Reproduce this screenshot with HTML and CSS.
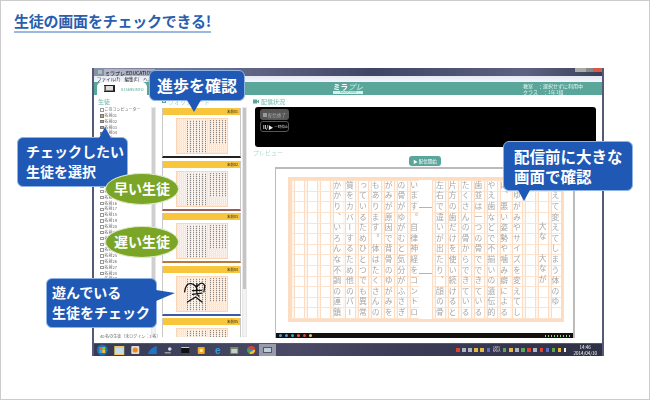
FILE: index.html
```html
<!DOCTYPE html>
<html lang="ja">
<head>
<meta charset="utf-8">
<title>生徒の画面をチェックできる!</title>
<link rel="stylesheet" href="styles.css">
</head>
<body>
<div class="page">
  <h1 class="title">生徒の画面をチェックできる!</h1>

  <div class="window">
    <div class="titlebar">
      <span class="app-icon"></span><span class="app-name">ミラプレ EDUCATION</span>
      <span class="win-btns"></span>
    </div>
    <div class="menubar"><span>ファイル(F)</span><span>編集(E)</span><span>ヘルプ(H)</span></div>
    <div class="header">
      <div class="tab">
        <svg class="tab-icon" width="13" height="8" viewBox="0 0 13 8"><rect x="1" y="0" width="11" height="7" fill="#222"/><rect x="3" y="1" width="7" height="4.5" fill="#ddd"/><rect x="1" y="1" width="1.5" height="5" fill="#888"/></svg>
        <span class="tab-text">01569SINFO</span>
      </div>
      <div class="logo"><span class="logo-main">ミラ<em>プレ</em></span><span class="logo-sub">EDUCATION</span></div>
      <div class="info"><span>教室　：選択せずに利用中</span><span>クラス　：1年1組</span></div>
    </div>
    <div class="content">
      <aside class="students">
        <div class="sec-label">生徒</div>
        <div class="students-body">
          <ul class="student-list">
            <li><i class="cb"></i>このコンピューター</li>
            <li><i class="cb on"></i>名前01</li><li><i class="cb on"></i>名前02</li><li><i class="cb on"></i>名前03</li><li><i class="cb on"></i>名前04</li>
            <li><i class="cb"></i>名前05</li><li><i class="cb"></i>名前06</li><li><i class="cb"></i>名前07</li><li><i class="cb"></i>名前08</li>
            <li><i class="cb"></i>名前09</li><li><i class="cb"></i>名前10</li><li><i class="cb"></i>名前11</li><li><i class="cb"></i>名前12</li>
            <li><i class="cb"></i>名前13</li><li><i class="cb"></i>名前14</li><li><i class="cb"></i>名前15</li><li><i class="cb"></i>名前16</li>
            <li><i class="cb"></i>名前17</li><li><i class="cb"></i>名前18</li><li><i class="cb"></i>名前19</li><li><i class="cb"></i>名前20</li>
            <li><i class="cb"></i>名前21</li><li><i class="cb"></i>名前22</li><li><i class="cb"></i>名前23</li><li><i class="cb"></i>名前24</li>
            <li><i class="cb"></i>名前25</li><li><i class="cb"></i>名前26</li><li><i class="cb"></i>名前27</li><li><i class="cb"></i>名前28</li>
            <li><i class="cb"></i>名前29</li><li><i class="cb"></i>名前30</li><li><i class="cb"></i>名前31</li><li><i class="cb"></i>名前32</li>
            <li><i class="cb"></i>名前33</li><li><i class="cb"></i>名前34</li><li><i class="cb"></i>名前35</li><li><i class="cb"></i>名前36</li>
          </ul>
          <div class="scrollbar short"><b></b></div>
        </div>
        <div class="status">40 名の生徒（未ログイン：1 名）</div>
      </aside>

      <section class="watch">
        <div class="sec-label watch-label"><i class="cb on green"></i>ウオッチモード</div>
        <div class="watch-body">
          <div class="thumbs">
            <article class="thumb strip-black"><header>名前01</header><div class="shot"><div class="mini"></div></div></article>
            <article class="thumb strip-red"><header>名前02</header><div class="shot"><div class="mini"></div></div></article>
            <article class="thumb strip-brown"><header>名前03</header><div class="shot"><div class="mini"></div></div></article>
            <article class="thumb strip-blue"><header>名前04</header><div class="shot"><div class="mini">
              <svg class="scribble" viewBox="255 45 158 107"><path d="M279 92Q283 62 300 66T319 88M319 74Q334 56 343 72L340 92M318 66Q314 98 324 106M304 88L333 87M304 100L333 96M288 124L314 108L334 124" fill="none" stroke="#111" stroke-width="4" stroke-linecap="round"/></svg>
            </div></div></article>
            <article class="thumb"><header>名前05</header><div class="shot"><div class="mini"></div></div></article>
          </div>
          <div class="scrollbar tall"><b></b></div>
        </div>
      </section>

      <main class="stage">
        <div class="sec-label"><svg class="cam" width="6" height="5" viewBox="0 0 6 5"><rect y=".5" width="4" height="4" fill="#5aa69a"/><path d="M4 2L6 .8V4.2L4 3z" fill="#5aa69a"/></svg>配信状況</div>
        <div class="broadcast">
          <div class="bc-btn stop"><i></i>配信終了</div>
          <div class="bc-btn pause"><strong>II/▶</strong>一時停止</div>
        </div>
        <div class="sec-label preview-label">プレビュー</div>
        <div class="start-row"><div class="start-btn">▶ 配信開始</div></div>
        <div class="frame">
          <div class="sheet">
            <p>歯えて変えてしまう体のゆ</p>
            <p class="lower">大な　大なが</p>
            <p></p>
            <p>のゆがみやサイズを変えてし</p>
            <p>は、悪い姿勢や噛み癖による</p>
            <p>やえ歯などで不揃いの遺伝的</p>
            <p>歯並は一つの骨でできている</p>
            <p>たくさんの骨からできている</p>
            <p>片方の歯だけを使い続けると</p>
            <p>左右で違いが出たり、顔の骨</p>
            <p class="gap"></p>
            <p>います。自律神経をコントロ</p>
            <p>の骨がゆがむと気分がふさぎ</p>
            <p>がみが原因で背骨のゆがみを</p>
            <p>もあります。体はたくさんの</p>
            <p>っているためひとつでも異常</p>
            <p>質をカバーするため他のパー</p>
            <p>かかり、いろんな不調の連鎖</p>
            <p></p><p></p><p></p>
          </div>
          <div class="frame-strip"><i></i><i></i><i></i><i></i><i></i><i></i><span class="strip-tray"></span></div>
        </div>
      </main>
    </div>
    <div class="taskbar">
      <svg class="tb" width="12" height="12" viewBox="0 0 12 12"><circle cx="6" cy="6" r="5.5" fill="#1f6fb5"/><path d="M3 3h3v3H3z" fill="#e8603c"/><path d="M6 3h3v3H6z" fill="#8cc63f"/><path d="M3 6h3v3H3z" fill="#3ea6e0"/><path d="M6 6h3v3H6z" fill="#f4c430"/></svg>
      <svg class="tb" width="10" height="9" viewBox="0 0 10 9"><rect width="10" height="9" fill="#eac964"/><rect x="1" y="2" width="8" height="6" fill="#c4dcec"/></svg>
      <svg class="tb" width="8" height="8" viewBox="0 0 8 8"><rect width="8" height="8" rx="1" fill="#ddd"/><circle cx="4" cy="4" r="2.6" fill="#ee8a1c"/></svg>
      <svg class="tb" width="9" height="8" viewBox="0 0 9 8"><path d="M0 8Q2 2 9 0V8z" fill="#1f74c8"/></svg>
      <svg class="tb" width="7" height="7" viewBox="0 0 7 7"><circle cx="5" cy="2" r="1.8" fill="#ddd"/><rect y="5" width="6" height="1.5" fill="#999"/></svg>
      <svg class="tb" width="8" height="6" viewBox="0 0 8 6"><rect width="8" height="6" fill="#111"/><rect y="0" width="8" height="1" fill="#ccc"/></svg>
      <svg class="tb" width="7" height="7" viewBox="0 0 7 7"><rect width="7" height="7" rx="1" fill="#f0a820"/><rect x="2" y="2" width="3" height="3" fill="#ffe9a8"/></svg>
      <span class="tb ie">e</span>
      <svg class="tb" width="8" height="7" viewBox="0 0 8 7"><rect width="8" height="7" fill="#7a8a70"/><rect x="1" y="2" width="6" height="4" fill="#c8d0c0"/></svg>
      <svg class="tb" width="8" height="8" viewBox="0 0 8 8"><circle cx="4" cy="4" r="4" fill="#d9432f"/><path d="M4 4L8 4A4 4 0 0 1 2 7.5z" fill="#f4c430"/><path d="M4 4L2 7.5A4 4 0 0 1 .6 2z" fill="#3aa655"/><circle cx="4" cy="4" r="1.6" fill="#3a7fd5"/></svg>
      <span class="tb active"><svg width="9" height="7" viewBox="0 0 9 7"><rect width="9" height="6" fill="#556"/><rect x="1" y="1" width="7" height="4" fill="#bcd"/></svg></span>
      <div class="tray">
        <i class="t-red"></i><i class="t-gray"></i><i class="t-gray"></i><i class="t-yel"></i><i class="t-yel"></i><i class="t-blue"></i><span class="t-text">CAPS<br>KANA</span>
        <i class="t-green"></i><i class="t-yel"></i><i class="t-gray"></i><i class="t-green"></i><i class="t-red"></i><i class="t-gray"></i><i class="t-red"></i><i class="t-blue"></i><i class="t-green"></i><i class="t-yel"></i><i class="t-white"></i>
        <span class="clock">14:46<br>2014/04/10</span>
      </div>
    </div>
  </div>

  <div class="callout c-progress">進歩を確認</div>
  <div class="callout c-select">チェックしたい<br>生徒を選択</div>
  <div class="callout c-play">遊んでいる<br>生徒をチェック</div>
  <div class="callout c-large">配信前に大きな<br>画面で確認</div>
  <div class="oval o-fast">早い生徒</div>
  <div class="oval o-slow">遅い生徒</div>
</div>
</body>
</html>
```
FILE: styles.css
```css
* { box-sizing: border-box; }
html, body { margin: 0; padding: 0; }
body { width: 650px; height: 400px; overflow: hidden; background: #fff; font-family: "Noto Sans CJK JP", "Noto Sans", sans-serif; }
.page { position: relative; width: 650px; height: 400px; border: 1px solid #ccc; overflow: hidden; padding: 11px 0 0 13px; }
.title { width: fit-content; margin: 0; height: 21px; font-size: 15px; line-height: 18px; font-weight: 700; color: #2b5fae; letter-spacing: -.22px; border-bottom: 2px solid #9ab8e0; white-space: nowrap; }

/* app window */
.window { width: 512px; height: 288px; margin: 35px 0 0 78px; display: flex; flex-direction: column; background: #fff; border-left: 2px solid #555a78; border-right: 2px solid #555a78; filter: blur(.35px); overflow: hidden; }
.titlebar { height: 8px; flex: none; display: flex; align-items: center; background: linear-gradient(90deg, #8a90a8, #6d7390 20%, #3f4564 55%, #5c6280 85%, #3a3f58); padding-left: 4px; font-size: 5px; color: #111; }
.app-icon { width: 4px; height: 4px; background: #9fc4b8; margin-right: 2px; }
.app-name { background: rgba(255,255,255,.35); line-height: 7px; padding: 0 1px; }
.win-btns { margin-left: auto; width: 27px; height: 4px; align-self: flex-start; background: linear-gradient(90deg, #aaa 0 40%, #888 40% 65%, #d8584a 65%); }
.menubar { height: 6px; flex: none; display: flex; gap: 4px; padding-left: 3px; font-size: 4.5px; line-height: 6px; color: #222; background: linear-gradient(#e4e8f4, #f4f6fb); }
.header { height: 13px; flex: none; display: flex; align-items: stretch; background: #5aa69a; padding-left: 3px; }
.tab { width: 50px; background: #fff; border-radius: 5px 5px 0 0; display: flex; align-items: center; padding-left: 6px; gap: 5px; }
.tab-icon { flex: none; }
.tab-text { font-size: 4px; color: #5aa69a; white-space: nowrap; }
.logo { margin-left: 186px; width: 30px; display: flex; flex-direction: column; }
.logo-main { font-size: 7.5px; line-height: 9px; font-weight: 700; color: #fff; white-space: nowrap; }
.logo-main em { font-style: italic; color: #a8dcd2; }
.logo-sub { font-size: 3px; line-height: 3px; background: #d8f0ea; color: #5aa69a; text-align: center; }
.info { margin-left: 160px; display: flex; flex-direction: column; font-size: 5px; line-height: 6px; color: #e8f6f2; padding-top: 1px; white-space: nowrap; }

.content { flex: 1; min-height: 0; display: flex; }
.sec-label { height: 12px; font-size: 6px; line-height: 13px; color: #6cb5a9; display: flex; align-items: center; gap: 1px; white-space: nowrap; }

/* students */
.students { width: 63px; flex: none; margin-left: 4px; display: flex; flex-direction: column; }
.students-body { display: flex; height: 230px; }
.student-list { list-style: none; margin: 0; padding: 0 0 0 2px; width: 53px; height: 230px; overflow: hidden; font-size: 4px; line-height: 5.85px; color: #666; }
.student-list li { height: 5.85px; display: flex; align-items: center; gap: 1px; white-space: nowrap; }
.cb { display: block; flex: none; width: 3.5px; height: 3.5px; border: .6px solid #999; background: #fff; }
.cb.on { border-color: #777; background: #d8a830; }
.cb.green { width: 4px; height: 4px; border-color: #5aa69a; background: #cfe8e2; margin-right: 1px; }
.status { font-size: 4px; line-height: 5px; color: #666; margin: -3px 0 0 2px; white-space: nowrap; }
.scrollbar { flex: none; width: 5px; background: #f2f2f2; border: 1px solid #e8e8e8; }
.scrollbar b { display: block; background: #cfcfcf; }
.scrollbar.short { height: 230px; }
.scrollbar.short b { height: 204px; }
.scrollbar.tall { height: 230px; margin-left: 1px; }
.scrollbar.tall b { height: 181px; background: #c4c4c4; }

/* thumbnails */
.watch { width: 92px; flex: none; display: flex; flex-direction: column; padding-left: 1px; }
.watch-label { color: #9ad0c6; }
.watch-body { display: flex; height: 230px; }
.thumbs { width: 79px; height: 230px; overflow: hidden; display: flex; flex-direction: column; gap: 2.6px; padding-top: 1px; }
.thumb { flex: none; height: 50px; border: 1px solid #c8c8c8; border-top: 0; border-bottom-width: 2px; display: flex; flex-direction: column; background: #fff; }
.thumb header { flex: none; height: 7px; background: #f8c63c; font-size: 3.5px; line-height: 7px; text-align: right; padding-right: 2px; color: #222; }
.shot { flex: 1; display: flex; justify-content: center; padding-top: 3px; }
.mini { position: relative; width: 52px; height: 36px; border: 1px solid #fbd6b4; background:
  repeating-linear-gradient(0deg, #fde8d8 0 1px, transparent 1px 2px),
  repeating-linear-gradient(90deg, #fde0c8 0 1px, #fff8f2 1px 2px); overflow: hidden; }
.mini::before, .mini::after { content: ""; position: absolute; top: 1px; background:
  repeating-linear-gradient(0deg, rgba(255,246,238,.75) 0 1px, transparent 1px 2px),
  repeating-linear-gradient(90deg, #8a8a8a 0 1px, transparent 1px 3px); }
.mini::before { left: 10px; width: 19px; height: 33px; }
.mini::after { left: 33px; width: 16px; height: 24px; }
.scribble { position: absolute; inset: 0; width: 100%; height: 100%; z-index: 1; }
.strip-black { border-bottom-color: #222; }
.strip-red { border-bottom-color: #a05a50; }
.strip-brown { border-bottom-color: #b87a3c; }
.strip-blue { border-bottom-color: #3a5aa8; }

/* preview */
.stage { flex: 1; min-width: 0; }
.cam { flex: none; margin-right: 1px; }
.broadcast { width: 341px; height: 40px; margin-left: 2px; background: #000; border-radius: 3px; padding: 2px 0 0 5px; display: flex; flex-direction: column; gap: 1px; }
.bc-btn { width: 29px; height: 11px; border-radius: 3px; display: flex; align-items: center; font-size: 4.5px; white-space: nowrap; }
.stop { background: #555; color: #aaa; gap: 1px; padding-left: 3px; }
.stop i { width: 4px; height: 4px; background: #999; }
.pause { border: 1px solid #555; color: #ccc; padding-left: 2px; gap: 1px; font-size: 3.5px; }
.pause strong { font-size: 5px; color: #eee; }
.preview-label { height: 6px; margin-top: 3px; line-height: 6px; color: #a8d8ce; }
.start-row { width: 300px; margin-left: 22px; height: 10px; display: flex; justify-content: center; }
.start-btn { width: 32px; height: 10px; border-radius: 3px; background: #5aa69a; color: #fff; font-size: 4.5px; line-height: 10px; text-align: center; white-space: nowrap; }
.frame { width: 300px; height: 171px; margin: 1px 0 0 22px; border: 1px solid #bbb; border-width: 2px 2px 0 1px; display: flex; flex-direction: column; }
.sheet { flex: none; display: flex; flex-direction: row-reverse; width: 276px; height: 145px; margin: 8px 0 0 12px; border: 3px solid #fcddc2; padding-right: 1px; overflow: hidden; background:
  repeating-linear-gradient(0deg, #fde2cc 0 1px, transparent 1px 10.6px),
  repeating-linear-gradient(270deg, #fff 0 9px, #fcdcc2 9px 10px, #fff6ee 10px 12px, #fcdcc2 12px 12.85px); }
.sheet p { flex: none; width: 12.85px; height: 100%; margin: 0; padding-top: 1px; writing-mode: vertical-rl; font-size: 7.8px; line-height: 10px; letter-spacing: 2.8px; color: #a6a6a6; white-space: nowrap; overflow: hidden; filter: blur(.25px); }
.sheet p.lower { padding-top: 42px; }
.sheet p.gap { background: #fff; position: relative; width: 12.85px; filter: none; }
.sheet p.gap::before, .sheet p.gap::after { content: ""; position: absolute; left: 0; right: 0; height: 1px; background: #f2a45c; }
.sheet p.gap::before { top: 27px; }
.sheet p.gap::after { top: 93px; }
.frame-strip { margin-top: auto; height: 5px; flex: none; background: #111; display: flex; align-items: center; gap: 3px; padding: 0 3px; }
.frame-strip i { width: 3px; height: 3px; background: #4a9ad0; border-radius: 50%; }
.frame-strip i:nth-child(4) { background: #e0603c; }
.frame-strip i:nth-child(5) { background: #d9432f; }
.frame-strip i:nth-child(6) { background: #eac964; }
.strip-tray { margin-left: auto; width: 25px; height: 2px; background: repeating-linear-gradient(90deg, #8c8 0 1px, transparent 1px 3px); }

/* taskbar */
.taskbar { position: relative; margin-top: auto; margin-left: -2px; margin-right: -2px; height: 13px; flex: none; display: flex; align-items: center; background: linear-gradient(90deg, #363a54, #4a4a66 40%, #3c3c58 60%, #2e3044); border-top: 1px solid #55586c; padding-left: 2px; }
.tb { flex: none; width: 16.5px; display: flex; justify-content: center; }
.ie { color: #3a9ae0; font: 700 10px/11px "Liberation Sans", sans-serif; }
.active { height: 12px; background: rgba(255,255,255,.45); align-items: center; }
.tray { margin-left: auto; display: flex; align-items: center; gap: 2.6px; padding-right: 7px; }
.tray i { width: 3.5px; height: 3.5px; background: #aaa; display: block; }
.tray .t-red { background: #d9432f; }
.tray .t-gray { background: #b0b4c0; }
.tray .t-yel { background: #e6b840; }
.tray .t-blue { background: #5a6ac8; }
.tray .t-green { background: #5aa64a; }
.tray .t-white { background: #eee; width: 2px; }
.t-text { font-size: 3px; line-height: 3.4px; color: #ddd; }
.clock { font-size: 4.5px; line-height: 6px; color: #fff; text-align: center; margin-left: 5px; white-space: nowrap; }

/* overlays */
.callout { position: absolute; background: #2058b6; border: 1px solid #8fb4e4; border-radius: 6px; color: #fff; font-weight: 700; white-space: nowrap; z-index: 2; }
.callout::after { content: ""; position: absolute; }
.c-progress { left: 148px; top: 69px; width: 96px; height: 31px; font-size: 16px; line-height: 29px; text-align: center; }
.c-progress::after { left: 37px; bottom: -12px; border-top: 12px solid #2058b6; border-left: 7px solid transparent; border-right: 7px solid transparent; }
.c-select { left: 16px; top: 136px; width: 111px; height: 50px; font-size: 14px; line-height: 19.5px; padding: 4px 0 0 8px; }
.c-select::after { left: 81px; top: -11px; border-bottom: 11px solid #2058b6; border-left: 6px solid transparent; border-right: 6px solid transparent; }
.c-play { left: 45px; top: 277px; width: 111px; height: 50px; font-size: 14px; line-height: 19.5px; padding: 4px 0 0 5px; }
.c-play::after { right: -19px; top: 11px; border-left: 19px solid #2058b6; border-top: 3px solid transparent; border-bottom: 8px solid transparent; }
.c-large { left: 502px; top: 140px; width: 130px; height: 50px; font-size: 15.5px; line-height: 20px; padding: 4px 0 0 10px; }
.c-large::after { left: 14px; bottom: -11px; border-top: 11px solid #2058b6; border-left: 6px solid transparent; border-right: 6px solid transparent; }
.oval { position: absolute; left: 104px; width: 74px; height: 32px; border-radius: 50%; background: #7aa526; border: 1px solid #dfe8c8; color: #fff; font-size: 14px; font-weight: 700; line-height: 29px; text-align: center; z-index: 3; }
.o-fast { top: 172px; }
.o-slow { top: 225px; }
```
